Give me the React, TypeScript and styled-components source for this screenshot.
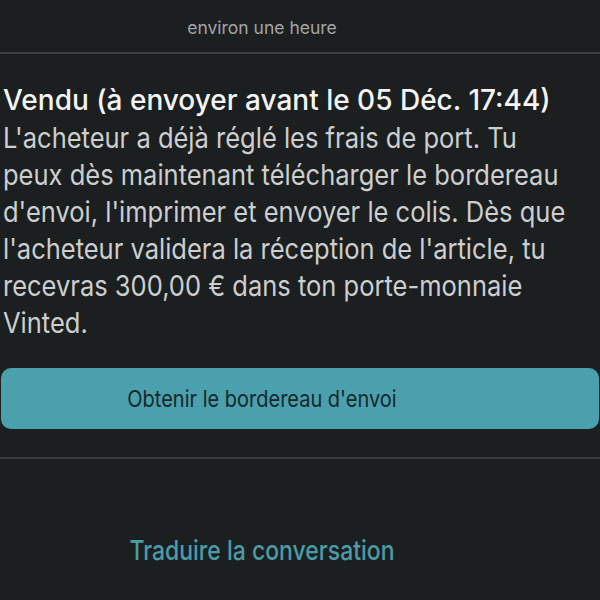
import React from "react";
import styled, { createGlobalStyle } from "styled-components";

const Global = createGlobalStyle`
  html, body { margin: 0; padding: 0; background: #1b1f20; }
  body { font-family: Inter, "Noto Sans", sans-serif; }
`;

const Screen = styled.div`
  width: 600px;
  height: 600px;
  background: #1b1f20;
  display: flex;
  flex-direction: column;
  overflow: hidden;
`;

const TimeLabel = styled.div`
  height: 52px;
  box-sizing: border-box;
  padding: 3px 76px 0 0;
  display: flex;
  align-items: center;
  justify-content: center;
  color: #a3a5a6;
  font-size: 17.5px;
`;

const Divider = styled.div`
  height: 2px;
  background: #3a3d3e;
`;

const Message = styled.div`
  padding: 27.5px 3px 0 3px;
  display: flex;
  flex-direction: column;
`;

const Title = styled.div`
  color: #f4f4f4;
  font-size: 28px;
  font-weight: 500;
  line-height: 37px;
  white-space: nowrap;
`;

const Body = styled.div`
  color: #cdcecf;
  font-size: 25.5px;
  line-height: 37px;
  white-space: nowrap;
`;

const BodyLine = styled.div`
  transform: scaleY(1.12);
`;

const ButtonRow = styled.div`
  padding: 27.5px 1px 28px 1px;
`;

const ActionButton = styled.button`
  width: 100%;
  height: 61px;
  border: none;
  border-radius: 10px;
  background: #4aa0ac;
  padding: 0 76px 0 0;
  display: flex;
  align-items: center;
  justify-content: center;
`;

const ButtonLabel = styled.span`
  color: #17282c;
  font-family: Inter, "Noto Sans", sans-serif;
  font-size: 20px;
  transform: scaleY(1.15);
`;

const Translate = styled.div`
  flex: 1;
  display: flex;
  justify-content: center;
  align-items: flex-start;
  padding: 75px 76px 0 0;
`;

const TranslateLabel = styled.span`
  color: #4c9ba7;
  font-size: 23px;
  font-weight: 500;
  line-height: 32px;
  transform: scaleY(1.2);
`;

const lines = [
  "L'acheteur a déjà réglé les frais de port. Tu",
  "peux dès maintenant télécharger le bordereau",
  "d'envoi, l'imprimer et envoyer le colis. Dès que",
  "l'acheteur validera la réception de l'article, tu",
  "recevras 300,00 € dans ton porte-monnaie",
  "Vinted.",
];

export default function App() {
  return (
    <>
      <Global />
      <Screen>
        <TimeLabel>environ une heure</TimeLabel>
        <Divider />
        <Message>
          <Title>Vendu (à envoyer avant le 05 Déc. 17:44)</Title>
          <Body>
            {lines.map((l, i) => (
              <BodyLine key={i}>{l}</BodyLine>
            ))}
          </Body>
        </Message>
        <ButtonRow>
          <ActionButton>
            <ButtonLabel>Obtenir le bordereau d'envoi</ButtonLabel>
          </ActionButton>
        </ButtonRow>
        <Divider />
        <Translate>
          <TranslateLabel>Traduire la conversation</TranslateLabel>
        </Translate>
      </Screen>
    </>
  );
}
